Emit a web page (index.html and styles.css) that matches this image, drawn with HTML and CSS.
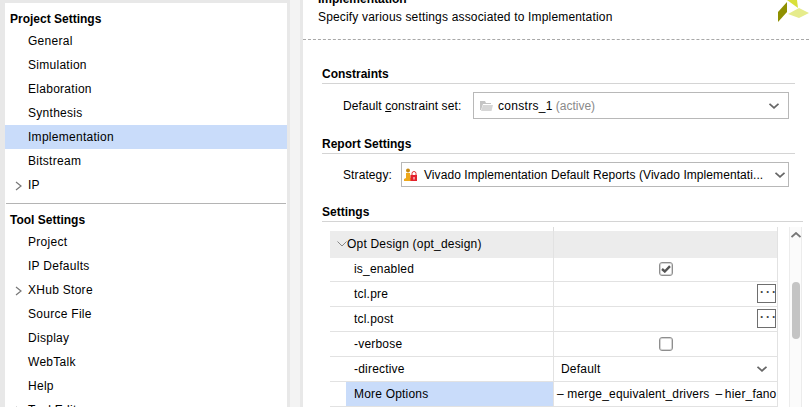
FILE: index.html
```html
<html>
<head>
<title>Settings</title>
<link rel="stylesheet" href="styles.css">
</head>
<body>
<div class="app">
  <div class="sidebar">
    <div class="nav-head first">Project Settings</div>
    <div class="nav-item">General</div>
    <div class="nav-item">Simulation</div>
    <div class="nav-item">Elaboration</div>
    <div class="nav-item">Synthesis</div>
    <div class="nav-item selected">Implementation</div>
    <div class="nav-item">Bitstream</div>
    <div class="nav-item"><svg class="caret" width="8" height="10" viewBox="0 0 8 10"><path d="M1 1 L6 5 L1 9" /></svg>IP</div>
    <div class="nav-rule"></div>
    <div class="nav-head">Tool Settings</div>
    <div class="nav-item">Project</div>
    <div class="nav-item">IP Defaults</div>
    <div class="nav-item"><svg class="caret" width="8" height="10" viewBox="0 0 8 10"><path d="M1 1 L6 5 L1 9" /></svg>XHub Store</div>
    <div class="nav-item">Source File</div>
    <div class="nav-item">Display</div>
    <div class="nav-item">WebTalk</div>
    <div class="nav-item">Help</div>
    <div class="nav-item"><svg class="caret" width="8" height="10" viewBox="0 0 8 10"><path d="M1 1 L6 5 L1 9" /></svg>Tool Editor</div>
  </div>
  <div class="gutter"></div>
  <div class="main">
    <div class="header">
      <div class="header-title">Implementation</div>
      <div class="header-desc">Specify various settings associated to Implementation</div>
      <svg class="logo" width="32" height="24" viewBox="0 0 32 24">
        <path d="M1 12 L10 2 L10 12 L1 22 Z" fill="#8f9000" />
        <path d="M10 0 L20 0 L21 8 Z" fill="#d9e03a" />
        <path d="M11 14 L22 8 L32 13 L22 18 Z" fill="#e6ec8c" />
      </svg>
    </div>
    <div class="section-title">Constraints</div>
    <div class="field-row constraint-row">
      <span class="field-label">Default <u>c</u>onstraint set:</span>
      <div class="combo">
        <svg class="folder" width="14" height="12" viewBox="0 0 14 12"><path d="M0 1 H5 L6 3 H11 V4 H3 L1 10 H0 Z" fill="#c4c4c4" /><path d="M3 5 H13 L11.5 11 H1 Z" fill="#d6d6d6" /></svg>
        <span class="combo-text">constrs_1</span><span class="muted">(active)</span>
        <svg class="chev" width="10" height="6" viewBox="0 0 10 6"><path d="M0.5 0.8 L5 4.8 L9.5 0.8" /></svg>
      </div>
    </div>
    <div class="section-title report">Report Settings</div>
    <div class="field-row strategy-row">
      <span class="field-label">Strategy:</span>
      <div class="combo">
        <svg class="lock" width="14" height="14" viewBox="0 0 14 14">
          <circle cx="4" cy="2.5" r="2" fill="#c98a10" />
          <path d="M2 5 H6 L6.5 10 H8 V13 H0 V11 L2 10 Z" fill="#eda81c" />
          <path d="M8 7 V5.5 A2 2 0 0 1 12 5.5 V7" fill="none" stroke="#e03030" stroke-width="1" />
          <rect x="6.5" y="7" width="6.5" height="6" fill="#e4202c" />
          <rect x="9.5" y="9" width="1" height="2.5" fill="#ffffff" />
        </svg>
        <span class="strategy-text">Vivado Implementation Default Reports (Vivado Implementati...</span>
        <svg class="chev" width="10" height="6" viewBox="0 0 10 6"><path d="M0.5 0.8 L5 4.8 L9.5 0.8" /></svg>
      </div>
    </div>
    <div class="section-title settings">Settings</div>
    <div class="table-wrap">
      <div class="table">
        <div class="top-stub"><div class="cell-a"></div><div class="cell-b"></div></div>
        <div class="row group"><div class="cell-a"><svg class="down" width="10" height="6" viewBox="0 0 10 6"><path d="M0.5 0.5 L5 5 L9.5 0.5" /></svg>Opt Design (opt_design)</div><div class="cell-b"></div></div>
        <div class="row"><div class="cell-a">is_enabled</div><div class="cell-b center"><span class="check"><svg width="10" height="8" viewBox="0 0 10 8"><path d="M1 4 L3.8 6.5 L9 1.2" /></svg></span></div></div>
        <div class="row"><div class="cell-a">tcl.pre</div><div class="cell-b end"><span class="dots">···</span></div></div>
        <div class="row"><div class="cell-a">tcl.post</div><div class="cell-b end"><span class="dots">···</span></div></div>
        <div class="row"><div class="cell-a">-verbose</div><div class="cell-b center"><span class="check"></span></div></div>
        <div class="row"><div class="cell-a">-directive</div><div class="cell-b">Default<svg class="chev" width="10" height="6" viewBox="0 0 10 6"><path d="M0.5 0.8 L5 4.8 L9.5 0.8" /></svg></div></div>
        <div class="row"><div class="cell-a picked">More Options</div><div class="cell-b opts"><span class="opt">&#8211; merge_equivalent_drivers</span><span class="opt tight">&#8211; hier_fano</span></div></div>
      </div>
      <div class="scrollbar">
        <svg width="10" height="6" viewBox="0 0 10 6"><path d="M0.5 5 L5 1 L9.5 5" /></svg>
        <div class="thumb"></div>
      </div>
    </div>
  </div>
</div>
</body>
</html>
```

FILE: styles.css
```css
html, body {
  margin: 0;
  height: 407px;
  overflow: hidden;
}
body {
  background-color: #e8e8e8;
  font-family: "Liberation Sans", Arial, sans-serif;
  font-size: 12px;
  color: #000;
}
.app {
  display: flex;
  height: 407px;
  padding: 3px 0 0 5px;
  box-sizing: border-box;
}
.sidebar {
  width: 282px;
  flex: none;
  background-color: #fff;
  overflow: hidden;
}
.nav-head {
  font-weight: bold;
  height: 22px;
  line-height: 25px;
  padding-left: 5px;
}
.nav-head.first {
  margin-top: 4px;
}
.nav-item {
  position: relative;
  height: 24px;
  line-height: 24px;
  padding-left: 23px;
  letter-spacing: 0.28px;
}
.nav-item.selected {
  background-color: #c9dcfa;
}
.caret {
  position: absolute;
  left: 10px;
  top: 8px;
  fill: none;
  stroke: #777;
  stroke-width: 1.2;
}
.nav-rule {
  height: 1px;
  margin: 6px 1px 0;
  background-color: #b4b4b4;
}
.nav-rule + .nav-head {
  margin-top: 4px;
}
.gutter {
  width: 10px;
  margin-left: 3px;
  margin-top: -3px;
  flex: none;
  background-color: #f3f3f3;
}
.main {
  flex: 1;
  margin-left: 3px;
  margin-top: -3px;
  background-color: #fff;
  overflow: hidden;
}
.header {
  display: flow-root;
  position: relative;
  height: 39px;
  border-bottom: 1px dashed #a8a8a8;
  padding-left: 15px;
}
.header-title {
  font-weight: bold;
  line-height: 14px;
  margin-top: -8px;
}
.header-desc {
  margin-top: 3px;
  line-height: 16px;
  letter-spacing: 0.17px;
}
.logo {
  position: absolute;
  right: 0;
  top: 0;
}
.section-title {
  font-weight: bold;
  margin: 0 14px 0 19px;
  height: 43px;
  line-height: 68px;
  border-bottom: 1px solid #d4d4d4;
}
.section-title.report, .section-title.settings {
  height: 20px;
  line-height: 22px;
}
.section-title.settings {
  margin-right: 6px;
}
.field-row {
  display: flex;
  align-items: center;
  padding-left: 40px;
  margin-right: 20px;
}
.field-label {
  flex: none;
  white-space: nowrap;
  letter-spacing: 0.1px;
}
.combo {
  flex: 1;
  display: flex;
  align-items: center;
  box-sizing: border-box;
  height: 100%;
  border: 1px solid #b8b8b8;
  white-space: nowrap;
}
.constraint-row {
  height: 27px;
  margin-top: 8px;
  margin-bottom: 14px;
}
.constraint-row .field-label {
  width: 130px;
}
.constraint-row .combo {
  padding-left: 6px;
}
.strategy-row {
  height: 25px;
  margin-top: 8px;
  margin-bottom: 14px;
}
.strategy-row .field-label {
  width: 58px;
}
.strategy-row .combo {
  padding-left: 2px;
}
.folder {
  margin-right: 4px;
}
.combo-text {
  letter-spacing: 0.3px;
}
.lock {
  margin-right: 6px;
}
.strategy-text {
  letter-spacing: 0.08px;
}
.muted {
  color: #8a8a8a;
  margin-left: 3px;
}
.chev {
  flex: none;
  margin-left: auto;
  margin-right: 9px;
  fill: none;
  stroke: #666;
  stroke-width: 1.8;
}
.strategy-row .chev {
  margin-right: 3px;
}
.table-wrap {
  display: flex;
  margin: 0 0 0 27px;
  height: 185px;
}
.table {
  width: 448px;
  flex: none;
  margin-top: 5px;
  box-sizing: border-box;
  border-right: 1px solid #e2e2e2;
}
.top-stub {
  display: flex;
  height: 4px;
}
.top-stub .cell-b {
  border-left: 1px solid #dcdcdc;
}
.row {
  display: flex;
  height: 25px;
  box-sizing: border-box;
  border-bottom: 1px solid #e2e2e2;
  line-height: 24px;
  letter-spacing: 0.2px;
}
.row:nth-child(3) {
  margin-top: -1px;
}
.row.group {
  height: 27px;
  background-color: #ececec;
  border-bottom: none;
  line-height: 26px;
}
.cell-a {
  width: 223px;
  flex: none;
  box-sizing: border-box;
  padding-left: 24px;
  white-space: nowrap;
  overflow: hidden;
}
.row.group .cell-a {
  padding-left: 7px;
}
.cell-a.picked {
  margin-left: 16px;
  width: 207px;
  padding-left: 8px;
  background-color: #c9dcfa;
}
.cell-b {
  flex: 1;
  min-width: 0;
  border-left: 1px solid #e2e2e2;
  padding-left: 7px;
  white-space: nowrap;
  overflow: hidden;
  display: flex;
  align-items: center;
}
.cell-b.center {
  justify-content: center;
  padding-left: 0;
}
.cell-b.end {
  justify-content: flex-end;
  padding: 0 1px 0 0;
}
.cell-b .chev {
  margin-right: 10px;
}
.cell-b.opts {
  padding-left: 3px;
  letter-spacing: 0.17px;
}
.opt {
  flex: none;
  margin-right: 6px;
}
.opt.tight {
  margin-right: 0;
  word-spacing: -1px;
}
.down {
  margin-right: 0;
  vertical-align: 1px;
  fill: none;
  stroke: #888;
}
.check {
  display: inline-flex;
  align-items: center;
  justify-content: center;
  width: 14px;
  height: 14px;
  box-sizing: border-box;
  border: 1px solid #8e8e8e;
  border-radius: 3px;
  box-shadow: inset 0 0 0 1px #d4d4d4;
}
.check svg {
  fill: none;
  stroke: #555;
  stroke-width: 2.4;
}
.dots {
  width: 19px;
  height: 19px;
  margin-bottom: 2px;
  box-sizing: border-box;
  border: 1px solid #6e6e6e;
  text-align: center;
  line-height: 15px;
  font-weight: bold;
  letter-spacing: 2px;
  text-indent: 2px;
  color: #444;
}
.scrollbar {
  width: 13px;
  flex: none;
  margin-left: 11px;
  margin-top: 5px;
  box-sizing: border-box;
  border-left: 1px solid #ececec;
  border-right: 1px solid #ececec;
  background-color: #fbfbfb;
}
.scrollbar svg {
  display: block;
  margin: 5px auto 0;
  fill: none;
  stroke: #777;
  stroke-width: 1.8;
}
.thumb {
  width: 8px;
  height: 57px;
  margin: 44px auto 0;
  border-radius: 4px;
  background-color: #c4c4c4;
}
```
